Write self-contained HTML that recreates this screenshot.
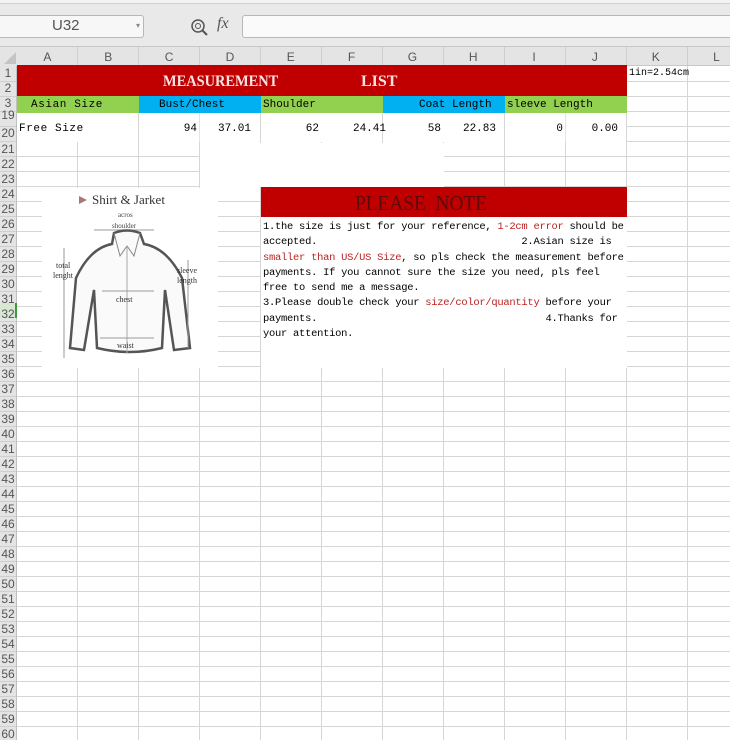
<!DOCTYPE html>
<html><head><meta charset="utf-8"><style>
*{margin:0;padding:0;box-sizing:border-box}
body{width:730px;height:740px;overflow:hidden;background:#fff;position:relative;font-family:"Liberation Mono","Noto Sans CJK SC",monospace;}
.a{position:absolute}
.t{font-size:11px;color:#000;white-space:nowrap}
</style></head><body>
<div class="a" style="left:0;top:0;width:730px;height:47px;background:#e9e9e9;border-bottom:1px solid #c8c8c8"></div>
<div class="a" style="left:0;top:0;width:730px;height:4px;background:#f3f3f3;border-bottom:1px solid #d0d0d0"></div>
<div class="a" style="left:-4px;top:15px;width:148px;height:23px;background:#f7f7f7;border:1px solid #b8b8b8;border-radius:3px"></div>
<div class="a" style="left:52px;top:17px;font:15px 'Liberation Sans',sans-serif;color:#555">U32</div>
<div class="a" style="left:136px;top:21px;font-size:8px;color:#888">&#9662;</div>
<svg class="a" style="left:189px;top:17px" width="20" height="20"><circle cx="9" cy="9" r="6" fill="none" stroke="#555" stroke-width="1.5"/><circle cx="9" cy="9" r="2.5" fill="none" stroke="#555"/><line x1="13" y1="13" x2="18" y2="18" stroke="#555" stroke-width="2"/></svg>
<div class="a" style="left:217px;top:15px;font:italic 16px 'Liberation Serif',serif;color:#555">fx</div>
<div class="a" style="left:242px;top:15px;width:500px;height:23px;background:#fafafa;border:1px solid #b8b8b8;border-radius:3px"></div>
<div class="a" style="left:0;top:47px;width:730px;height:19px;background:#e4e4e4;border-bottom:1px solid #c8c8c8;background-image:repeating-linear-gradient(90deg,transparent 0 60px,#cfcfcf 60px 61px);background-position:17px 0"></div>
<div class="a" style="left:0;top:47px;width:17px;height:19px;background:#e4e4e4"></div>
<svg class="a" style="left:4px;top:52px" width="12" height="12"><polygon points="12,0 12,12 0,12" fill="#c4c4c4"/></svg>
<div class="a" style="left:17px;top:50px;width:730px;font:12px 'Liberation Sans',sans-serif;color:#555;display:flex">
<span style="width:61px;text-align:center">A</span><span style="width:61px;text-align:center">B</span><span style="width:61px;text-align:center">C</span><span style="width:61px;text-align:center">D</span><span style="width:61px;text-align:center">E</span><span style="width:61px;text-align:center">F</span><span style="width:61px;text-align:center">G</span><span style="width:61px;text-align:center">H</span><span style="width:61px;text-align:center">I</span><span style="width:61px;text-align:center">J</span><span style="width:61px;text-align:center">K</span><span style="width:61px;text-align:center">L</span></div>
<div class="a" style="left:17px;top:66px;width:713px;height:674px;background-image:repeating-linear-gradient(90deg,transparent 0 60px,#d6d6d6 60px 61px),repeating-linear-gradient(180deg,transparent 0 14px,#d6d6d6 14px 15px);background-position:0 0,0 1px"></div>
<div class="a" style="left:0;top:66px;width:17px;height:674px;background:#e4e4e4;border-right:1px solid #c0c0c0;background-image:repeating-linear-gradient(180deg,transparent 0 14px,#cfcfcf 14px 15px);background-position:0 1px"></div>
<div class="a" style="left:0;top:303px;width:17px;height:15px;background:#d8e6d4;border-right:2px solid #3c9a3c"></div>
<div class="a" id="rh" style="left:0;top:66px;width:16px;font:12px 'Liberation Sans',sans-serif;color:#555;text-align:center;line-height:15px"></div>
<script>
var h='',ls=[[1,66],[2,81],[3,96],[19,108],[20,126]];
for(var n=21;n<=60;n++)ls.push([n,142+(n-21)*15]);
ls.forEach(function(p){h+='<div style="position:absolute;left:0;width:16px;top:'+(p[1]-66)+'px">'+p[0]+'</div>'});
document.getElementById('rh').innerHTML=h;
</script>
<div class="a" style="left:17px;top:65px;width:610px;height:31px;background:#c00000"></div>
<div class="a" style="left:163px;top:73px;font:bold 16px 'Liberation Serif',serif;color:#fbe3e3;transform:scaleX(0.9);transform-origin:0 0">MEASUREMENT</div>
<div class="a" style="left:361px;top:73px;font:bold 16px 'Liberation Serif',serif;color:#fbe3e3">LIST</div>
<div class="a" style="left:17px;top:96px;width:122px;height:17px;background:#92d050"></div>
<div class="a" style="left:139px;top:96px;width:122px;height:17px;background:#00b0f0"></div>
<div class="a" style="left:261px;top:96px;width:122px;height:17px;background:#92d050"></div>
<div class="a" style="left:383px;top:96px;width:122px;height:17px;background:#00b0f0"></div>
<div class="a" style="left:505px;top:96px;width:122px;height:17px;background:#92d050"></div>
<div class="a t" style="left:31px;top:99px;letter-spacing:0.6px">Asian Size</div>
<div class="a t" style="left:159px;top:99px">Bust/Chest</div>
<div class="a t" style="left:263px;top:99px">Shoulder</div>
<div class="a t" style="left:419px;top:99px">Coat Length</div>
<div class="a t" style="left:507px;top:99px">sleeve Length</div>
<div class="a" style="left:17px;top:113px;width:610px;height:29px;background:#fff;background-image:repeating-linear-gradient(90deg,transparent 0 121px,#d6d6d6 121px 122px),repeating-linear-gradient(90deg,transparent 0 182px,#e4e4e4 182px 183px)"></div>
<div class="a t" style="left:19px;top:123px;letter-spacing:0.6px">Free Size</div>
<div class="a t" style="left:139px;top:123px;width:58px;text-align:right">94</div>
<div class="a t" style="left:200px;top:123px;width:51px;text-align:right">37.01</div>
<div class="a t" style="left:261px;top:123px;width:58px;text-align:right">62</div>
<div class="a t" style="left:322px;top:123px;width:64px;text-align:right">24.41</div>
<div class="a t" style="left:383px;top:123px;width:58px;text-align:right">58</div>
<div class="a t" style="left:444px;top:123px;width:52px;text-align:right">22.83</div>
<div class="a t" style="left:505px;top:123px;width:58px;text-align:right">0</div>
<div class="a t" style="left:566px;top:123px;width:52px;text-align:right">0.00</div>
<div class="a t" style="left:629px;top:68px;font-size:10px">1in=2.54cm</div>
<div class="a" style="left:200px;top:143px;width:244px;height:44px;background:#fff"></div>
<div class="a" style="left:42px;top:188px;width:176px;height:180px;background:#fff"></div>
<svg class="a" style="left:42px;top:188px" width="176" height="180" font-family="Liberation Serif,serif">
<polygon points="37,8 45,12 37,16" fill="#a77"/>
<text x="50" y="16" font-size="13" fill="#333">Shirt &amp; Jarket</text>
<text x="76" y="29" font-size="7" fill="#444">acros</text>
<text x="70" y="40" font-size="7" fill="#444">shoulder</text>
<line x1="52" y1="42" x2="112" y2="42" stroke="#999"/>
<path d="M72,45 Q85,40 98,45 L102,56 Q125,60 140,90 L148,160 L132,162 L123,102 L120,160 Q88,168 55,160 L52,102 L42,162 L28,160 L34,90 Q48,60 70,56 Z" fill="#fafafa" stroke="#555" stroke-width="2.5"/>
<path d="M72,45 L78,68 L85,58 L92,68 L98,45" fill="none" stroke="#888"/>
<line x1="85" y1="58" x2="85" y2="165" stroke="#aaa"/>
<line x1="22" y1="60" x2="22" y2="170" stroke="#999"/>
<line x1="146" y1="72" x2="146" y2="160" stroke="#999"/>
<line x1="60" y1="103" x2="112" y2="103" stroke="#999"/>
<line x1="58" y1="150" x2="112" y2="150" stroke="#999"/>
<text x="14" y="80" font-size="8" fill="#333">total</text>
<text x="11" y="90" font-size="8" fill="#333">lenght</text>
<text x="135" y="85" font-size="8" fill="#333">sleeve</text>
<text x="135" y="95" font-size="8" fill="#333">length</text>
<text x="74" y="114" font-size="8" fill="#333">chest</text>
<text x="75" y="160" font-size="8" fill="#333">waist</text>
</svg>
<div class="a" style="left:261px;top:187px;width:366px;height:30px;background:#c00000"></div>
<div class="a" style="left:355px;top:191px;font:21px 'Liberation Serif',serif;color:#5a0a0a;transform:scaleX(0.92);transform-origin:0 0">PLEASE&nbsp;&nbsp;NOTE</div>
<div class="a" style="left:261px;top:217px;width:366px;height:151px;background:#fff"></div>
<div class="a" style="left:263px;top:220px;width:366px;font-size:10px;letter-spacing:-0.25px;line-height:15.3px;color:#000;white-space:pre;transform:scaleX(1.045);transform-origin:0 0">1.the size is just for your reference, <span style="color:#b22">1-2cm error</span> should be
accepted.                                  2.Asian size is
<span style="color:#b22">smaller than US/US Size</span>, so pls check the measurement before
payments. If you cannot sure the size you need, pls feel
free to send me a message.
3.Please double check your <span style="color:#b22">size/color/quantity</span> before your
payments.                                      4.Thanks for
your attention.</div>
</body></html>
